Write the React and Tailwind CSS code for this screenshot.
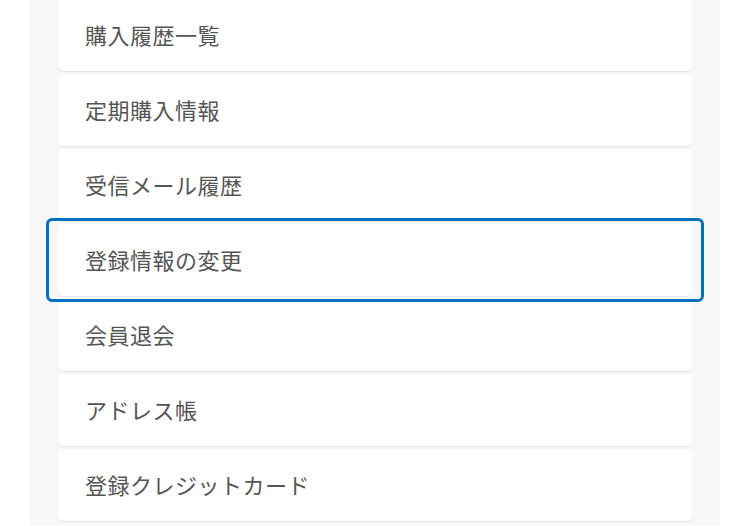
export default function App() {
  const items = [
    "購入履歴一覧",
    "定期購入情報",
    "受信メール履歴",
    "登録情報の変更",
    "会員退会",
    "アドレス帳",
    "登録クレジットカード",
    "",
  ];
  return (
    <div className="w-[750px] h-[526px] bg-white overflow-hidden" style={{ fontFamily: '"Noto Sans CJK JP", "Noto Sans", sans-serif' }}>
      <div className="ml-[30px] w-[690px] h-full bg-[#f7f7f7] px-[28px]">
        <div className="flex flex-col gap-[3px] -mt-[1px]">
          {items.map((t, i) => (
            <div
              key={i}
              className="relative h-[72px] shrink-0 rounded-[5px] bg-white shadow-[0_1px_1px_rgba(0,0,0,0.07)] flex items-center pl-[27px] pb-[2px] text-[22px] font-normal text-[#555555] tracking-[0.5px]"
            >
              {t}
              {i === 3 && (
                <span className="absolute z-10 -left-[12px] -right-[12px] -top-[6px] -bottom-[6px] rounded-[6px] border-[3px] border-[#0070c0] pointer-events-none" />
              )}
            </div>
          ))}
        </div>
      </div>
    </div>
  );
}
